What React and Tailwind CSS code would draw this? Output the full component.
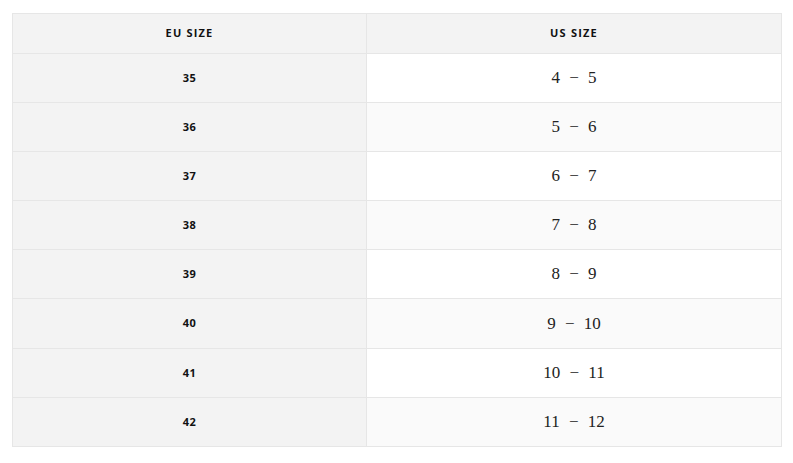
const rows = [
  ['35', '4', '5'],
  ['36', '5', '6'],
  ['37', '6', '7'],
  ['38', '7', '8'],
  ['39', '8', '9'],
  ['40', '9', '10'],
  ['41', '10', '11'],
  ['42', '11', '12'],
];

export default function App() {
  return (
    <div className="min-h-screen bg-white pt-[13px] pl-[12px]">
      <div className="w-[770px] border border-[#e6e6e6] font-['Open_Sans',sans-serif] text-[#111]">
        {/* header */}
        <div className="grid h-[39px] grid-cols-[354px_1fr] bg-[#f3f3f3] text-[11px] font-bold tracking-[1.2px]">
          <div className="flex items-center justify-center border-r border-[#e6e6e6]">EU SIZE</div>
          <div className="flex items-center justify-center">US SIZE</div>
        </div>
        {rows.map(([eu, a, b], i) => (
          <div key={eu} className={`grid ${i === 5 ? 'h-[50px]' : 'h-[49px]'} grid-cols-[354px_1fr] border-t border-[#e6e6e6]`}>
            <div className="flex items-center justify-center border-r border-[#e6e6e6] bg-[#f3f3f3] text-[11px] font-bold tracking-[0.5px]">
              {eu}
            </div>
            <div
              className={`flex items-center justify-center font-['Liberation_Serif',serif] text-[17px] [word-spacing:5px] text-[#222] ${
                i % 2 === 0 ? 'bg-white' : 'bg-[#fafafa]'
              }`}
            >
              {a} − {b}
            </div>
          </div>
        ))}
      </div>
    </div>
  );
}
